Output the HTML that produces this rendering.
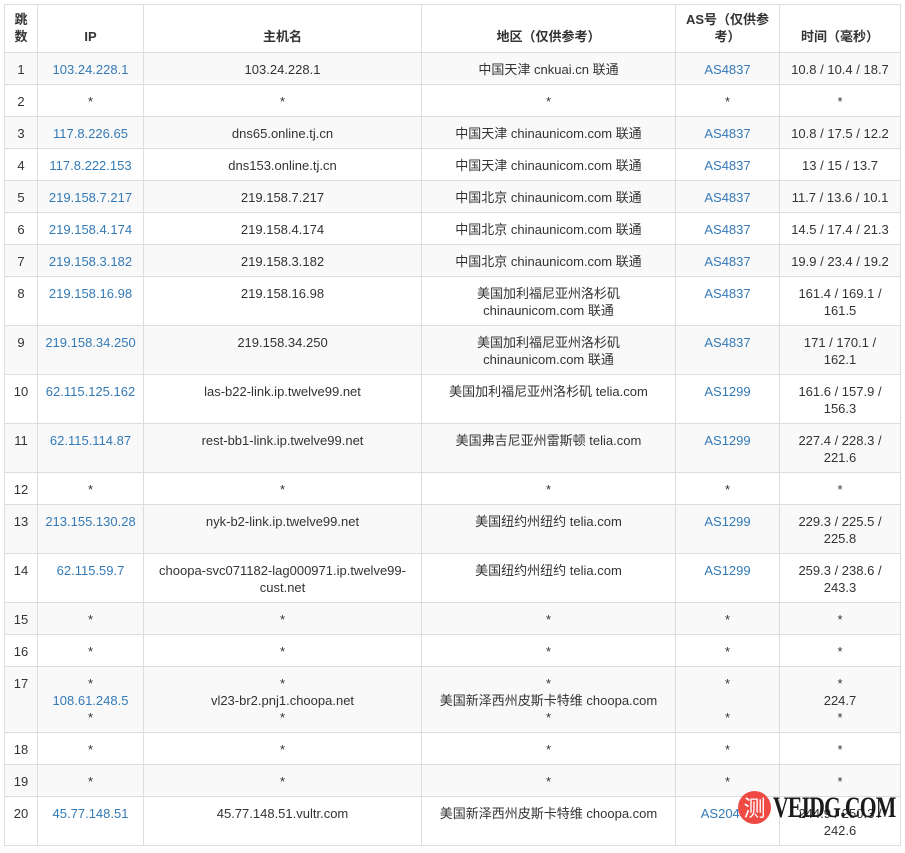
<!DOCTYPE html>
<html><head><meta charset="utf-8"><style>
body{margin:0;background:#fff;width:905px;height:853px;overflow:hidden;position:relative;font-family:"Liberation Sans","Noto Sans CJK SC",sans-serif;font-size:13px;color:#333}
table{position:absolute;left:4px;top:4px;border-collapse:collapse;table-layout:fixed}
td,th{border:1px solid #ddd;text-align:center;vertical-align:top;padding:8px 2px 0;line-height:17px;box-sizing:border-box;overflow:hidden}
th{vertical-align:bottom;padding:0 2px 7px;font-weight:bold}
tbody tr:nth-child(odd){background:#f9f9f9}
a{color:#337ab7;text-decoration:none}
.wm{position:absolute;left:724px;top:788px;height:40px;width:180px;overflow:hidden}
</style></head><body>
<table>
<colgroup><col style="width:33px"><col style="width:106px"><col style="width:278px"><col style="width:254px"><col style="width:104px"><col style="width:121px"></colgroup>
<thead><tr style="height:48px"><th>跳<br>数</th><th>IP</th><th>主机名</th><th>地区（仅供参考）</th><th>AS号（仅供参<br>考）</th><th>时间（毫秒）</th></tr></thead>
<tbody>
<tr style="height:32px"><td>1</td><td><a>103.24.228.1</a></td><td>103.24.228.1</td><td>中国天津 cnkuai.cn 联通</td><td><a>AS4837</a></td><td>10.8 / 10.4 / 18.7</td></tr>
<tr style="height:32px"><td>2</td><td>*</td><td>*</td><td>*</td><td>*</td><td>*</td></tr>
<tr style="height:32px"><td>3</td><td><a>117.8.226.65</a></td><td>dns65.online.tj.cn</td><td>中国天津 chinaunicom.com 联通</td><td><a>AS4837</a></td><td>10.8 / 17.5 / 12.2</td></tr>
<tr style="height:32px"><td>4</td><td><a>117.8.222.153</a></td><td>dns153.online.tj.cn</td><td>中国天津 chinaunicom.com 联通</td><td><a>AS4837</a></td><td>13 / 15 / 13.7</td></tr>
<tr style="height:32px"><td>5</td><td><a>219.158.7.217</a></td><td>219.158.7.217</td><td>中国北京 chinaunicom.com 联通</td><td><a>AS4837</a></td><td>11.7 / 13.6 / 10.1</td></tr>
<tr style="height:32px"><td>6</td><td><a>219.158.4.174</a></td><td>219.158.4.174</td><td>中国北京 chinaunicom.com 联通</td><td><a>AS4837</a></td><td>14.5 / 17.4 / 21.3</td></tr>
<tr style="height:32px"><td>7</td><td><a>219.158.3.182</a></td><td>219.158.3.182</td><td>中国北京 chinaunicom.com 联通</td><td><a>AS4837</a></td><td>19.9 / 23.4 / 19.2</td></tr>
<tr style="height:49px"><td>8</td><td><a>219.158.16.98</a></td><td>219.158.16.98</td><td>美国加利福尼亚州洛杉矶<br>chinaunicom.com 联通</td><td><a>AS4837</a></td><td>161.4 / 169.1 /<br>161.5</td></tr>
<tr style="height:49px"><td>9</td><td><a>219.158.34.250</a></td><td>219.158.34.250</td><td>美国加利福尼亚州洛杉矶<br>chinaunicom.com 联通</td><td><a>AS4837</a></td><td>171 / 170.1 /<br>162.1</td></tr>
<tr style="height:49px"><td>10</td><td><a>62.115.125.162</a></td><td>las-b22-link.ip.twelve99.net</td><td>美国加利福尼亚州洛杉矶 telia.com</td><td><a>AS1299</a></td><td>161.6 / 157.9 /<br>156.3</td></tr>
<tr style="height:49px"><td>11</td><td><a>62.115.114.87</a></td><td>rest-bb1-link.ip.twelve99.net</td><td>美国弗吉尼亚州雷斯顿 telia.com</td><td><a>AS1299</a></td><td>227.4 / 228.3 /<br>221.6</td></tr>
<tr style="height:32px"><td>12</td><td>*</td><td>*</td><td>*</td><td>*</td><td>*</td></tr>
<tr style="height:49px"><td>13</td><td><a>213.155.130.28</a></td><td>nyk-b2-link.ip.twelve99.net</td><td>美国纽约州纽约 telia.com</td><td><a>AS1299</a></td><td>229.3 / 225.5 /<br>225.8</td></tr>
<tr style="height:49px"><td>14</td><td><a>62.115.59.7</a></td><td>choopa-svc071182-lag000971.ip.twelve99-<br>cust.net</td><td>美国纽约州纽约 telia.com</td><td><a>AS1299</a></td><td>259.3 / 238.6 /<br>243.3</td></tr>
<tr style="height:32px"><td>15</td><td>*</td><td>*</td><td>*</td><td>*</td><td>*</td></tr>
<tr style="height:32px"><td>16</td><td>*</td><td>*</td><td>*</td><td>*</td><td>*</td></tr>
<tr style="height:66px"><td>17</td><td>*<br><a>108.61.248.5</a><br>*</td><td>*<br>vl23-br2.pnj1.choopa.net<br>*</td><td>*<br>美国新泽西州皮斯卡特维 choopa.com<br>*</td><td>*<br>&nbsp;<br>*</td><td>*<br>224.7<br>*</td></tr>
<tr style="height:32px"><td>18</td><td>*</td><td>*</td><td>*</td><td>*</td><td>*</td></tr>
<tr style="height:32px"><td>19</td><td>*</td><td>*</td><td>*</td><td>*</td><td>*</td></tr>
<tr style="height:49px"><td>20</td><td><a>45.77.148.51</a></td><td>45.77.148.51.vultr.com</td><td>美国新泽西州皮斯卡特维 choopa.com</td><td><a>AS20473</a></td><td>244.9 / 250.3 /<br>242.6</td></tr>
</tbody></table>
<div class="wm">
<div style="position:absolute;left:14px;top:3px;width:33px;height:33px;border-radius:50%;background:#f04a44;color:#fff;font-size:22px;line-height:33px;text-align:center;font-family:'Noto Sans CJK SC',sans-serif">测</div>
<div style="position:absolute;left:49px;top:1px;font-family:'Liberation Serif',serif;font-weight:bold;font-size:30px;line-height:38px;color:#1a1a1a;letter-spacing:-1px;transform:scaleX(0.72);transform-origin:left">VEIDG.COM</div>
</div>
</body></html>
